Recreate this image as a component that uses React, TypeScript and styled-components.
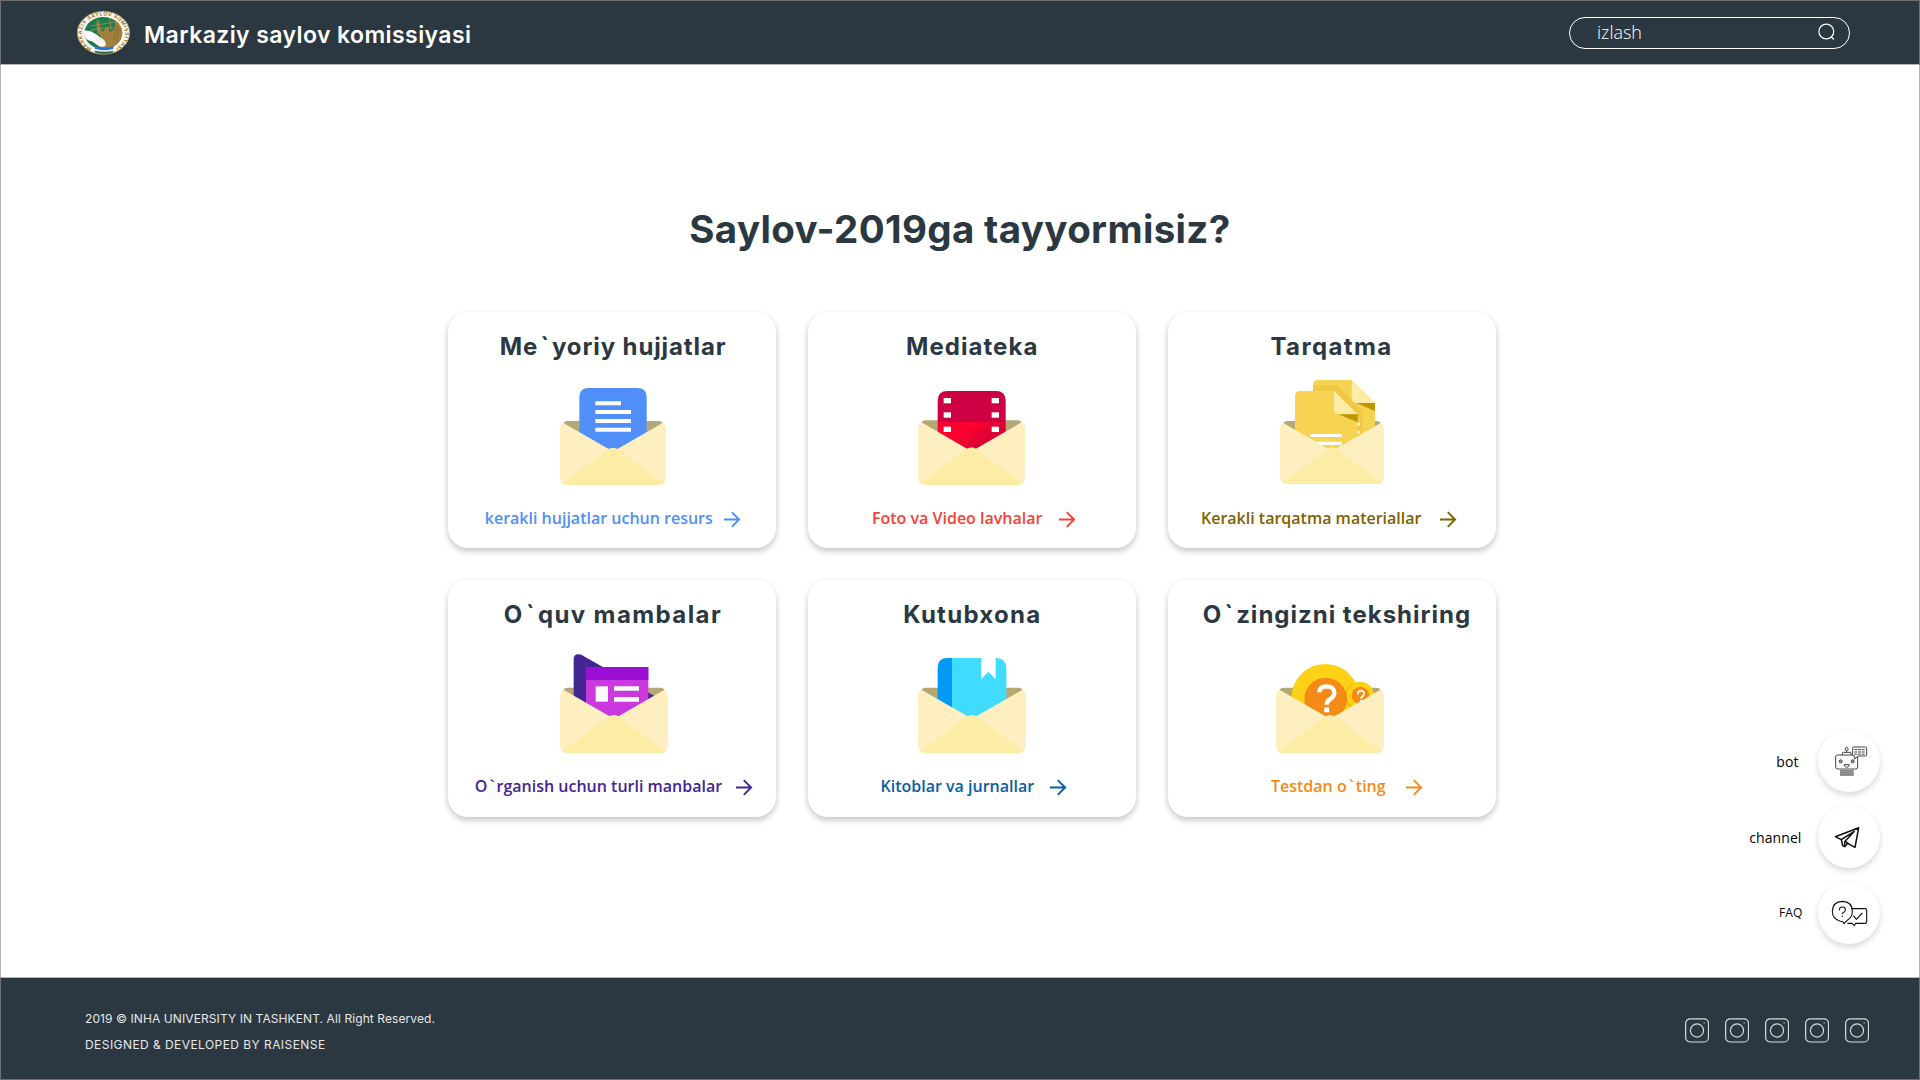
import React from "react";
import styled, { createGlobalStyle } from "styled-components";

const INK = "#2b3841";
const HEADING = `"Inter", "Open Sans", sans-serif`;
const BODY = `"Open Sans", "Noto Sans", sans-serif`;

const GlobalStyle = createGlobalStyle`
  *, *::before, *::after { box-sizing: border-box; }
  body { margin: 0; background: #fff; }
  svg { display: block; flex: none; }
`;

const Page = styled.div`
  display: flex;
  flex-direction: column;
  width: 1920px;
  height: 1080px;
  overflow: hidden;
  background: #fff;
  font-family: ${BODY};
`;

/* ---------- header ---------- */

const Header = styled.header`
  flex: none;
  display: flex;
  align-items: center;
  justify-content: space-between;
  height: 65px;
  padding: 0 69px 0 74.5px;
  background: ${INK};
  border: 1px solid #707070;
  border-bottom-color: #b4b6b8;
`;

const Brand = styled.a`
  display: flex;
  align-items: center;
  gap: 13.5px;
  padding-top: 1px;
`;

const BrandName = styled.span`
  padding-top: 3px;
  font: 600 23px/30px ${HEADING};
  letter-spacing: 0.41px;
  color: #fff;
  white-space: nowrap;
`;

const SearchBox = styled.label`
  display: flex;
  align-items: center;
  justify-content: space-between;
  width: 281px;
  height: 32px;
  padding: 0 14px 1px 27px;
  border: 1px solid #fff;
  border-radius: 16px;
  font: 300 18px/28px ${BODY};
  color: #fff;
`;

/* ---------- main ---------- */

const Main = styled.main`
  flex: 1;
  display: flex;
  flex-direction: column;
  align-items: flex-start;
  border: solid #b5b5b5;
  border-width: 0 1px;
  padding-top: 139px;
  position: relative;
`;

const Title = styled.h1`
  align-self: stretch;
  margin: 0 0 58px;
  text-align: center;
  font: 700 38.5px/50px ${HEADING};
  letter-spacing: 0.35px;
  color: ${INK};
`;

const CardGrid = styled.section`
  display: grid;
  grid-template-columns: repeat(3, 328px);
  gap: 32px 31.7px;
  margin-left: 447.3px;
`;

const Card = styled.article`
  display: flex;
  flex-direction: column;
  height: 236.4px;
  padding-top: 20px;
  background: #fff;
  border-radius: 20px;
  box-shadow: 0 3px 6px rgba(0, 0, 0, 0.24);
`;

const CardTitle = styled.h2<{ $spacing: number; $left: number }>`
  margin: 0 0 14px;
  padding-left: ${(p) => p.$left}px;
  font: 700 24px/30px ${HEADING};
  letter-spacing: ${(p) => p.$spacing}px;
  color: ${INK};
  white-space: nowrap;
`;

const Tick = styled.span`
  margin: 0 2px;
`;

const Picture = styled.div<{ $left: number }>`
  padding-left: ${(p) => p.$left}px;
  margin-bottom: 20px;
`;

const CardLink = styled.a<{ $left: number; $color: string; $gap: number }>`
  display: flex;
  align-items: center;
  gap: ${(p) => p.$gap}px;
  padding-left: ${(p) => p.$left}px;
  font: 600 16px/24px ${BODY};
  color: ${(p) => p.$color};
  white-space: nowrap;
  svg { margin-top: 2px; }
`;

/* ---------- floating shortcuts ---------- */

const Shortcuts = styled.nav`
  position: absolute;
  right: 39px;
  top: 665px;
  display: flex;
  flex-direction: column;
  align-items: flex-end;
  gap: 14px;
`;

const Shortcut = styled.a<{ $gap: number; $size: number; $drop?: number }>`
  display: flex;
  align-items: center;
  gap: ${(p) => p.$gap}px;
  font: 500 ${(p) => p.$size}px/20px ${BODY};
  letter-spacing: 0.1px;
  color: #000;
`;

const ShortcutLabel = styled.span<{ $drop: number }>`
  padding-top: ${(p) => p.$drop}px;
`;

const Round = styled.span`
  width: 62px;
  height: 62px;
  border-radius: 50%;
  background: #fff;
  box-shadow: 0 3px 6px rgba(0, 0, 0, 0.16);
`;

/* ---------- footer ---------- */

const Footer = styled.footer`
  flex: none;
  display: flex;
  justify-content: space-between;
  height: 103px;
  padding: 28px 50px 0 84px;
  background: ${INK};
  border: 1px solid #707070;
  border-top-color: #b4b6b8;
`;

const Legal = styled.div`
  font: 400 12px/26px ${HEADING};
  color: #e6e8e9;
`;

const LegalLine = styled.p<{ $spacing: number }>`
  margin: 0;
  letter-spacing: ${(p) => p.$spacing}px;
`;

const Social = styled.div`
  display: flex;
  gap: 16px;
  padding-top: 12px;
`;

/* ---------- drawings ---------- */

const Emblem = () => (
  <svg width="55" height="46" viewBox="225 30 165 138">
    <defs>
      <path id="ring" d="M272 146 A65 54 0 1 1 343 146" />
    </defs>
    <ellipse cx="307.500" cy="98.500" rx="78.500" ry="64.500" fill="#fbf8f0" stroke="#b59a5c" strokeWidth="2" />
    <ellipse cx="307" cy="99" rx="57" ry="48" fill="#1f7a4c" />
    <path d="M352 70 Q366 84 363 106 Q356 140 322 144 Q296 146 284 132 L300 112 Q278 84 296 58 Q292 82 306 96 L314 84 L322 80 L326 96 Q346 92 342 60 Z" fill="#a3803c" />
    <path d="M270 78 L342 66 M288 58 L290 100 M326 54 L330 90 M268 92 Q300 80 346 84" stroke="#a98c4a" strokeWidth="2.500" fill="none" />
    <path d="M336 70 Q350 88 338 120 M350 78 Q356 98 346 124" stroke="#7c5d24" strokeWidth="2" fill="none" />
    <path d="M249 92 Q266 90 284 102 L306 118 Q316 124 314 136 Q306 144 294 138 L272 124 Q254 122 250 106 Z" fill="#fdfdfd" />
    <path d="M284 116 L296 130 M294 112 L304 126" stroke="#b9bdb9" strokeWidth="1.500" />
    <path d="M280 138 Q308 148 338 139 L336 148 Q308 154 282 147 Z" fill="#1f7be0" />
    <path d="M282 147 Q308 154 336 148 L337 153 Q308 158 280 152 Z" fill="#f1e4ea" />
    <path d="M280 152 Q308 158 338 153 L334 159 Q308 165 284 159 Z" fill="#2d6b4a" />
    <text fontFamily={HEADING} fontWeight="700" fontSize="15.500" fill="#a07a30">
      <textPath href="#ring" textLength="298">MARKAZIY SAYLOV KOMISSIYASI</textPath>
    </text>
  </svg>
);

const SearchIcon = () => (
  <svg width="17" height="18" viewBox="0 0 17 18" fill="none" stroke="#fff" strokeWidth="1.200">
    <circle cx="8.300" cy="8.500" r="7.400" />
    <path d="M13.300 13.800 L15.800 16.500" />
  </svg>
);

const Arrow = () => (
  <svg width="17" height="17" viewBox="0 0 17 17" fill="none" stroke="currentColor" strokeWidth="1.900">
    <path d="M0 8.500 H15 M7.800 1.200 L15.100 8.500 L7.800 15.800" />
  </svg>
);

type EnvelopeProps = { x: number; y: number; w: number; h: number; children: React.ReactNode };

const Envelope = ({ x, y, w, h, children }: EnvelopeProps) => {
  const place = `translate(${x} ${y}) scale(${w / 318} ${h / 192})`;
  return (
    <>
      <path transform={place} d="M10 6 Q14 0 22 0 H296 Q304 0 308 6 L250 60 H68 Z" fill="#b4a877" />
      {children}
      <g transform={place}>
        <path d="M10 6 L146 84 Q159 78 172 84 L308 6 Q318 12 318 22 V170 Q318 192 296 192 H22 Q0 192 0 170 V22 Q0 12 10 6 Z" fill="#feefc1" />
        <path d="M8 186 L141 88 Q159 73 177 88 L310 186 Q304 192 296 192 H22 Q14 192 8 186 Z" fill="#fceca6" />
      </g>
    </>
  );
};

const Frame = ({ x, y, children }: { x: number; y: number; children: React.ReactNode }) => (
  <svg width="114" height="110" viewBox={`${x} ${y} 342 330`}>{children}</svg>
);

const DocumentsArt = () => (
  <Frame x={348} y={228}>
    <Envelope x={360} y={363} w={318} h={192}>
      <path d="M418 470 V292 Q418 264 446 264 H592 Q620 264 620 292 V470 Z" fill="#508ff7" />
      <path d="M466 309.500 H543 M466 336 H573 M466 363 H573 M466 389.500 H573" stroke="#fff" strokeWidth="12" />
    </Envelope>
  </Frame>
);

const MediaArt = () => (
  <Frame x={342} y={228}>
    <defs>
      <linearGradient id="film" x1="0" y1="0" x2="1" y2="0.600">
        <stop offset="0.450" stopColor="#f9002f" />
        <stop offset="0.900" stopColor="#d00038" />
      </linearGradient>
    </defs>
    <Envelope x={354} y={361} w={321} h={194}>
      <rect x="413" y="364" width="204" height="100" fill="url(#film)" />
      <path d="M413 366 V302 Q413 273 442 273 H588 Q617 273 617 302 V366 Z" fill="#cd0044" />
      <g fill="#fff">
        {[294, 337, 380].map((y) => (
          <React.Fragment key={y}>
            <rect x="431" y={y} width="22" height="16" />
            <rect x="575" y={y} width="22" height="16" />
          </React.Fragment>
        ))}
      </g>
    </Envelope>
  </Frame>
);

const HandoutArt = () => (
  <Frame x={360} y={228}>
    <Envelope x={375} y={363} w={312} h={189}>
      <path d="M474 420 V256 Q474 240 490 240 H590 L660 309 V420 Z" fill="#f6d352" />
      <path d="M474 255 H544 L622 332 V420 H474 Z" fill="#edc945" />
      <path d="M590 240 L660 309 H606 Q590 309 590 293 Z" fill="#feeba6" />
      <path d="M604 309 H660 V333 Z" fill="#bf9600" />
      <path d="M420 470 V288 Q420 273 436 273 H537 L608 343 V470 Z" fill="#f6d352" />
      <path d="M537 273 L608 343 H553 Q537 343 537 327 Z" fill="#feeba6" />
      <path d="M550 343 H608 V367 Z" fill="#bf9600" />
      <path d="M466 406.500 H561 M466 430 H561" stroke="#fff" strokeWidth="9.500" />
      <path d="M607 373 H615 M607 397 H615" stroke="#fef3cd" strokeWidth="9" />
    </Envelope>
  </Frame>
);

const LearningArt = () => (
  <Frame x={351} y={222}>
    <Envelope x={360} y={353} w={324} h={196}>
      <path d="M401 440 V268 Q401 252 416 253 Q424 253 434 260 L642 377 L600 440 Z" fill="#442593" />
      <rect x="438" y="291" width="187" height="170" fill="#ca38de" />
      <rect x="438" y="291" width="187" height="39" fill="#990fd3" />
      <rect x="467" y="349" width="37" height="46" fill="#fafafa" />
      <path d="M522 355.500 H597 M522 388 H597" stroke="#fafafa" strokeWidth="14" />
    </Envelope>
  </Frame>
);

const LibraryArt = () => (
  <Frame x={345} y={222}>
    <Envelope x={354} y={353} w={324} h={196}>
      <path d="M413 450 V293 Q413 264 442 264 H457 V450 Z" fill="#049af3" />
      <path d="M456 450 V264 H543 V328 L565 305 L587 328 V264 Q619 264 619 296 V450 Z" fill="#40dbff" />
    </Envelope>
  </Frame>
);

const QuizArt = () => (
  <Frame x={354} y={222}>
    <defs>
      <clipPath id="coinClip">
        <circle cx="511" cy="384" r="102" />
      </clipPath>
    </defs>
    <Envelope x={363} y={353} w={324} h={196}>
      <circle cx="511" cy="384" r="102" fill="#fcd116" />
      <circle cx="512" cy="387" r="64" fill="#f48b16" />
      <circle cx="612" cy="378" r="42" fill="#a86a00" fillOpacity="0.220" clipPath="url(#coinClip)" />
      <circle cx="616" cy="376" r="41" fill="#fcd116" />
      <circle cx="616" cy="376" r="26" fill="#f48b16" />
      <g fill="none" stroke="#fff">
        <path d="M493 367 Q493 349 515 349 Q538 350 538 369 Q538 380 526 387 Q515 393 515 404" strokeWidth="13" />
        <path d="M515 412 V427" strokeWidth="15" />
        <path d="M609 373 Q608 362 618 362 Q628 363 627 371 Q627 376 621 380 Q618 382 618 386" strokeWidth="5.500" />
        <path d="M618 390 V397" strokeWidth="6.500" />
      </g>
    </Envelope>
  </Frame>
);

const BotArt = () => (
  <svg width="62" height="62" viewBox="294 59 186 186" fill="none" stroke="#444" strokeWidth="3">
    <rect x="347" y="134" width="66" height="42" rx="6" />
    <path d="M367 134 V128 Q367 126 370 126 H391 Q393 126 393 128 V134 M380 126 V121" />
    <circle cx="380" cy="116" r="4.500" />
    <g fill="#999">
      <circle cx="362" cy="153" r="4.500" />
      <circle cx="398" cy="153" r="4.500" />
    </g>
    <path d="M372 163 H388 Q386 171 380 171 Q374 171 372 163 Z" />
    <path d="M400 110 H437 Q440 110 440 113 V134 Q440 137 437 137 H414 L404 146 V137 H400 Q398 137 398 134 V113 Q398 110 400 110 Z" fill="#fff" />
    <path d="M403 118 H434 M403 125 H434 M403 131.500 H434" strokeDasharray="9 2" strokeWidth="3" />
    <path d="M360 188 H401" stroke="#999" strokeWidth="18" />
    <path d="M360 181 H401 M360 187 H401 M360 193 H401" stroke="#777" strokeWidth="2" />
  </svg>
);

const PlaneArt = () => (
  <svg width="62" height="62" viewBox="294 287 186 186" fill="none" stroke="#111" strokeWidth="4.600" strokeLinejoin="round" strokeLinecap="round">
    <path d="M346 379 L416 352 L405 411 L383 399 L374 409 L368 406 L364 388 Z" />
    <path d="M364 388 L403 363 L374 394 V408 M376 393 L384 399" />
  </svg>
);

const FaqArt = () => (
  <svg width="62" height="62" viewBox="294 515 186 186" fill="none" stroke="#111" strokeWidth="3.300" strokeLinejoin="round">
    <path d="M396 595 H435 Q440 595 440 600 V634 Q440 639 435 639 H407 L403 646 L396 639 H382" />
    <path d="M361 633 Q337 626 337 603 Q338 574 367 573 Q397 574 397 603 Q397 620 384 628 L372 640 L370 635 Z" fill="#fff" />
    <path d="M358 600 Q357 590 367 590 Q377 590 376 599 Q376 604 367 609 V612 M367 616 V620" />
    <path d="M400 616 L409 627 L427 608" />
  </svg>
);

const SocialIcon = () => (
  <svg width="24" height="25" viewBox="0 0 24 25" fill="none" stroke="#d8dbdc" strokeWidth="1.200">
    <rect x="0.600" y="0.900" width="22.900" height="23.100" rx="4.500" />
    <circle cx="12" cy="12.500" r="6.600" />
    <circle cx="19.200" cy="5" r="0.500" stroke="#6d777d" />
  </svg>
);

/* ---------- content ---------- */

type CardData = {
  title: React.ReactNode;
  spacing: number;
  titleLeft: number;
  art: React.ReactNode;
  artLeft: number;
  link: React.ReactNode;
  linkLeft: number;
  gap: number;
  color: string;
};

const cards: CardData[] = [
  { title: <>Me<Tick>`</Tick>yoriy hujjatlar</>, spacing: 0.89, titleLeft: 51.5, art: <DocumentsArt />, artLeft: 108, link: "kerakli hujjatlar uchun resurs", linkLeft: 36.5, gap: 11.5, color: "#508ff7" },
  { title: "Mediateka", spacing: 1.06, titleLeft: 98, art: <MediaArt />, artLeft: 106, link: "Foto va Video lavhalar", linkLeft: 64, gap: 16.5, color: "#f44336" },
  { title: "Tarqatma", spacing: 1.37, titleLeft: 102.8, art: <HandoutArt />, artLeft: 107.5, link: "Kerakli tarqatma materiallar", linkLeft: 33.3, gap: 19, color: "#7d6200" },
  { title: <>O<Tick>`</Tick>quv mambalar</>, spacing: 1.4, titleLeft: 55.5, art: <LearningArt />, artLeft: 108.7, link: <span>O<Tick>`</Tick>rganish uchun turli manbalar</span>, linkLeft: 26.5, gap: 13.5, color: "#442593" },
  { title: "Kutubxona", spacing: 1.27, titleLeft: 95.2, art: <LibraryArt />, artLeft: 107, link: "Kitoblar va jurnallar", linkLeft: 72.5, gap: 16, color: "#085ea2" },
  { title: <>O<Tick>`</Tick>zingizni tekshiring</>, spacing: 1, titleLeft: 35.2, art: <QuizArt />, artLeft: 105.5, link: <span>Testdan o<Tick>`</Tick>ting</span>, linkLeft: 103.3, gap: 20, color: "#f48b16" },
];

export default function App() {
  return (
    <Page>
      <GlobalStyle />
      <Header>
        <Brand>
          <Emblem />
          <BrandName>Markaziy saylov komissiyasi</BrandName>
        </Brand>
        <SearchBox>
          <span>izlash</span>
          <SearchIcon />
        </SearchBox>
      </Header>
      <Main>
        <Title>Saylov-2019ga tayyormisiz?</Title>
        <CardGrid>
          {cards.map((c, i) => (
            <Card key={i}>
              <CardTitle $spacing={c.spacing} $left={c.titleLeft}>{c.title}</CardTitle>
              <Picture $left={c.artLeft}>{c.art}</Picture>
              <CardLink $left={c.linkLeft} $gap={c.gap} $color={c.color}>
                {c.link}
                <Arrow />
              </CardLink>
            </Card>
          ))}
        </CardGrid>
        <Shortcuts>
          <Shortcut $gap={19.5} $size={14}>
            <ShortcutLabel $drop={2}>bot</ShortcutLabel>
            <Round><BotArt /></Round>
          </Shortcut>
          <Shortcut $gap={16.5} $size={14}>
            <ShortcutLabel $drop={2}>channel</ShortcutLabel>
            <Round><PlaneArt /></Round>
          </Shortcut>
          <Shortcut $gap={15.5} $size={12}>
            <ShortcutLabel $drop={0}>FAQ</ShortcutLabel>
            <Round><FaqArt /></Round>
          </Shortcut>
        </Shortcuts>
      </Main>
      <Footer>
        <Legal>
          <LegalLine $spacing={0.09}>2019 © INHA UNIVERSITY IN TASHKENT. All Right Reserved.</LegalLine>
          <LegalLine $spacing={0.44}>DESIGNED &amp; DEVELOPED BY RAISENSE</LegalLine>
        </Legal>
        <Social>
          {[0, 1, 2, 3, 4].map((n) => <SocialIcon key={n} />)}
        </Social>
      </Footer>
    </Page>
  );
}
